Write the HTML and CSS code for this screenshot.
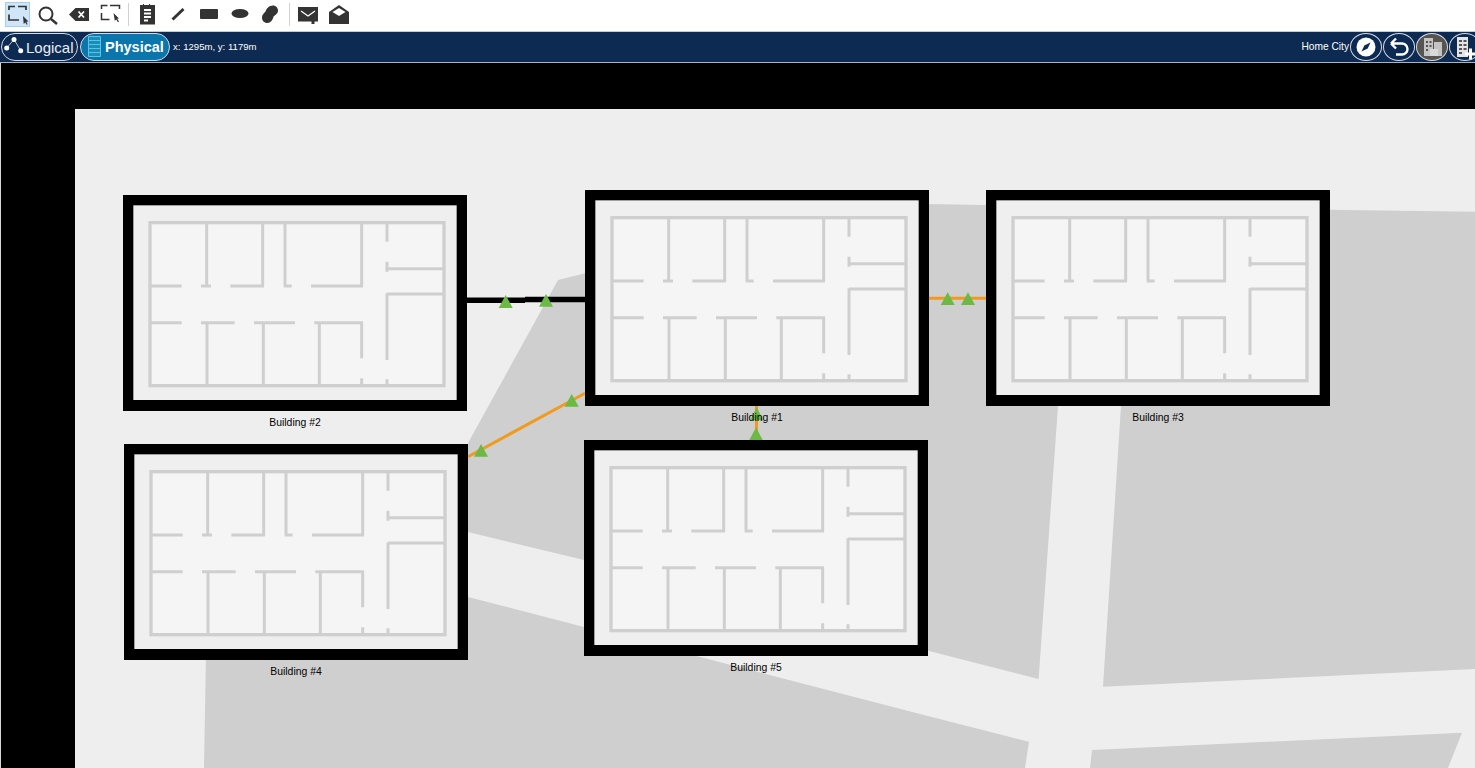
FILE: index.html
```html
<!DOCTYPE html>
<html lang="en">
<head>
<meta charset="utf-8">
<title>Physical view</title>
<link rel="stylesheet" href="styles.css">
</head>
<body>
<div class="app">
  <div class="toolbar">
    <div class="tool"><svg class="ico" viewBox="2 0 31 31"><rect class="hl" x="5.500" y="2.500" width="24" height="24"/><path class="dash" d="M9 10V6.500h6M18 6.500h8V10M9 14.500V20h10"/><path class="solid" d="M23 16l5.500 5.500-2.200.3 1.400 2.400-1 .6-1.400-2.400-1.600 1.600z"/></svg></div>
    <div class="tool"><svg class="ico" viewBox="33 0 31 31"><circle class="ring" cx="46" cy="14" r="6.500"/><path class="handle" d="M51 19l6 5"/></svg></div>
    <div class="tool"><svg class="ico" viewBox="64 0 31 31"><path class="solid" d="M69 14.500l6.500-6.500H89v13H75.500z"/><path class="cut" d="M78.500 11.500l5.500 6M84 11.500l-5.500 6"/></svg></div>
    <div class="tool"><svg class="ico" viewBox="95 0 31 31"><path class="dash thin" d="M101.500 9V5.500h6M110 5.500h9.500V9M101.500 13v6.500h8"/><path class="solid" d="M113.500 13l5.500 5.500-1.800.2 1.800 2.800-1 .7-1.800-2.800-1.400 1.400z"/></svg></div>
    <div class="sep"></div>
    <div class="tool"><svg class="ico" viewBox="131 0 31 31"><path class="solid" d="M140 5h3v-1h1v1h5v-1h1v1h5v19.500h-15z"/><path class="cut" d="M144 10h7M144 13.500h7M144 17h7M144 20.500h4"/></svg></div>
    <div class="tool"><svg class="ico" viewBox="162 0 31 31"><path class="handle wide" d="M172.500 19.500l11-10.500"/></svg></div>
    <div class="tool"><svg class="ico" viewBox="193 0 31 31"><rect class="solid" x="200" y="9" width="18" height="10" rx="1"/></svg></div>
    <div class="tool"><svg class="ico" viewBox="224 0 31 31"><ellipse class="solid" cx="240" cy="13.500" rx="8.500" ry="4.500"/></svg></div>
    <div class="tool"><svg class="ico" viewBox="255 0 31 31"><path class="solid" d="M262 17.500c0-3 2-4 3.500-6 1-3 3.500-6 7.500-6 3 0 5 2.500 5 5 0 3-2.500 4.500-4.500 6-.5 3-3 6.500-6 6.500-3.500 0-5.500-2.500-5.500-5.500z"/></svg></div>
    <div class="sep sep-wide"></div>
    <div class="tool"><svg class="ico" viewBox="292 0 31 31"><path class="solid" d="M298 7h20v14.500h-3.500V24h-3v-2.500H298z"/><path class="cut slim" d="M301 11l7 5 7-5"/></svg></div>
    <div class="tool"><svg class="ico" viewBox="323 0 31 31"><path class="solid" d="M329 12l10-7 10 7v12h-20z"/><path class="flap" d="M332.500 12l6.500-4 6.500 4-6.500 4z"/></svg></div>
  </div>

  <div class="navbar">
    <div class="pill pill-logical">
      <svg class="pill-ico" viewBox="0 0 23 26"><path class="net" d="M11 5.500L3.700 14M11 5.500l6.700 11"/><circle class="dot" cx="11" cy="5.500" r="2.500"/><circle class="dot" cx="3.700" cy="14" r="2.500"/><circle class="dot" cx="17.700" cy="16.700" r="2.500"/></svg>
      <span>Logical</span>
    </div>
    <div class="pill pill-physical">
      <svg class="pill-ico" viewBox="0 0 23 26"><path class="floors" d="M6.500 2.500h12v20h-12zM6.500 6.500h12M6.500 10.500h12M6.500 14.500h12M6.500 18.500h12"/></svg>
      <span>Physical</span>
    </div>
    <span class="coords">x: 1295m, y: 1179m</span>
    <div class="nav-right">
      <span class="city">Home City</span>
      <div class="round"><svg class="round-ico" viewBox="0 0 30 26"><circle class="white" cx="15" cy="13" r="9.500"/><path class="needle" d="M19.500 8.500l-2.800 6-6.200 3 2.800-6z"/></svg></div>
      <div class="round"><svg class="round-ico" viewBox="0 0 30 26"><path class="arrow" d="M7 9.500l5-5M7 9.500l5 5M7 9.500h11a5.500 5.500 0 0 1 0 11h-6"/></svg></div>
      <div class="round round-on"><svg class="round-ico" viewBox="0 0 30 26"><path class="pale" d="M7 4h9v18H7zM17 8h8v14h-8z"/><path class="win" d="M9 7h2v2H9zM12.500 7h2v2h-2zM9 11h2v2H9zM12.500 11h2v2h-2zM9 15h2v2H9z"/><path class="pale2" d="M13 15h8v7h-8z"/></svg></div>
      <div class="round"><svg class="round-ico" viewBox="0 0 30 26"><path class="pale3" d="M7 3h11v20H7z"/><path class="win" d="M9 6h3v2H9zM13.500 6h3v2h-3zM9 10h3v2H9zM13.500 10h3v2h-3zM9 14h3v2H9zM13.500 14h3v2h-3zM9 18h3v2H9z"/><path class="plus" d="M15 20h11M20.500 14.500v11"/></svg></div>
    </div>
  </div>

  <div class="stage">
    <svg class="map" viewBox="1 63 1474 705">
      <defs>
        <g id="bld" transform="scale(.33333) translate(-9 -15)">
          <rect class="b-outer" x="9" y="15" width="1032" height="648"/>
          <rect class="b-inner" x="40" y="46" width="970" height="584"/>
          <rect class="b-plan" x="90" y="98" width="882" height="489"/>
          <path class="b-wall" d="M260 98V288M428 98V288M495 98V288M725 98V288M90 288H185M243 288H273M331 288H432M491 288H515M573 288H729M90 398H185M243 398H344M402 398H525M583 398H729M261 398V587M430 398V587M598 398V587M725 398V505M725 565V587M801 310V510M801 568V587M801 98V155M801 215V245M801 236H972M801 312H972"/>
        </g>
      </defs>

      <rect class="land" x="75" y="109" width="1400" height="659"/>
      <path class="block" d="M468 443L558 280 590 272 925 204 1060 206 1058 406 1038.600 679 928 650.700 584 560 468 532Z"/>
      <path class="block" d="M1060 206L1475 211.700V669L1103 686.700 1121 406Z"/>
      <path class="block" d="M208 540L468 597 584 627 920 714 1029 741.700 1025 768H204Z"/>
      <path class="block" d="M1092 750L1462 732.700 1448 768H1090Z"/>

      <path class="link-black" d="M467 300.300H525"/>
      <path class="link-black" d="M525 299.500H585"/>
      <path class="link-orange" d="M468 456.700L585 393.300"/>
      <path class="link-orange" d="M929 298.300H986"/>
      <path class="link-orange" d="M756.500 406V440"/>
      <path class="tri" d="M505.700 295l7 13h-14z"/>
      <path class="tri" d="M546 294l7 12.700h-14z"/>
      <path class="tri" d="M571.700 394l7 12.700h-14z"/>
      <path class="tri" d="M481 444l7 12.700h-14z"/>
      <path class="tri" d="M947.700 292.300l7 12.700h-14z"/>
      <path class="tri" d="M968 292.300l7 12.700h-14z"/>
      <path class="tri" d="M756.700 407.300l6.500 13h-13z"/>
      <path class="tri" d="M756 427.500l6.700 12.500h-13.400z"/>

      <use href="#bld" x="123" y="195"/>
      <use href="#bld" x="585" y="190"/>
      <use href="#bld" x="986" y="190"/>
      <use href="#bld" x="124" y="444"/>
      <use href="#bld" x="584" y="440"/>

      <text class="label" x="295" y="426">Building #2</text>
      <text class="label" x="757" y="421">Building #1</text>
      <text class="label" x="1158" y="421">Building #3</text>
      <text class="label" x="296" y="675">Building #4</text>
      <text class="label" x="756" y="671">Building #5</text>
    </svg>
  </div>
</div>
</body>
</html>
```
FILE: styles.css
```css
* { box-sizing: border-box; }
html, body { margin: 0; height: 100%; overflow: hidden; background: #fff; }
body { font-family: "Liberation Sans", Arial, sans-serif; }
.app { display: flex; flex-direction: column; height: 768px; width: 1475px; overflow: hidden; }

.toolbar { display: flex; height: 32px; flex: none; padding-left: 2px; background: #fff; border-bottom: 1px solid #c6cad2; }
.tool { width: 31px; height: 31px; flex: none; }
.ico { display: block; width: 31px; height: 31px; }
.sep { width: 1px; height: 23px; margin: 3px 2px 0; background: #d2d2d2; flex: none; }
.sep-wide { margin-left: 3px; }
.hl { fill: #cfe5f8; stroke: #a6cfee; stroke-width: 1; }
.dash { fill: none; stroke: #333; stroke-width: 1.700; }
.dash.thin { stroke-width: 1.500; }
.solid { fill: #333; }
.ring { fill: none; stroke: #333; stroke-width: 2; }
.handle { fill: none; stroke: #333; stroke-width: 2.400; }
.handle.wide { stroke-width: 3; }
.cut { fill: none; stroke: #fff; stroke-width: 1.800; }
.cut.slim { stroke-width: 1.300; }
.flap { fill: #fff; }

.navbar { display: flex; align-items: flex-start; height: 31px; flex: none; padding: 1px 0 0 1px; gap: 2px; background: #0d2a52; border-bottom: 1px solid #aab3c0; color: #fff; overflow: hidden; }
.pill { display: flex; align-items: center; height: 28px; border: 1px solid #d3dae4; border-radius: 14px; flex: none; }
.pill-logical { width: 77px; background: #0d2a52; color: #e9eef5; padding-left: 1px; font-size: 15px; }
.pill-physical { width: 90px; background: #0a76ab; font-weight: bold; padding-left: 1px; font-size: 14.500px; }
.pill-ico { width: 23px; height: 26px; flex: none; }
.net { fill: none; stroke: #fff; stroke-width: .7; }
.dot { fill: #fff; }
.floors { fill: #1a8dbd; stroke: #5cc3de; stroke-width: 1; }
.coords { font-size: 9.600px; line-height: 28px; margin-left: 1px; white-space: nowrap; }
.nav-right { display: flex; align-items: center; gap: 1px; margin-left: auto; margin-right: -6px; flex: none; }
.city { font-size: 10.200px; line-height: 28px; white-space: nowrap; }
.round { width: 32px; height: 28px; border: 1px solid #d3dae4; border-radius: 50%; flex: none; background: #0d2a52; }
.round-on { background: #58544f; }
.round-ico { display: block; width: 30px; height: 26px; }
.white { fill: #fff; }
.needle { fill: #0d2a52; }
.arrow { fill: none; stroke: #fff; stroke-width: 2.400; }
.pale { fill: #c4c4c4; }
.pale2 { fill: #d8d8d8; }
.pale3 { fill: #e4e4e4; }
.win { fill: #555; }
.plus { fill: none; stroke: #fff; stroke-width: 3; }

.stage { flex: 1; min-height: 0; background: #000; border-left: 1px solid #d8d8d8; }
.map { display: block; width: 1474px; height: 705px; }
.land { fill: #eeeeee; }
.block { fill: #cfcfcf; }
.link-black { fill: none; stroke: #000; stroke-width: 5.500; }
.link-orange { fill: none; stroke: #f09a1e; stroke-width: 3; }
.tri { fill: #6cb944; }
.b-outer { fill: #000; }
.b-inner { fill: #efefef; }
.b-plan { fill: #f5f5f5; stroke: #cfcfcf; stroke-width: 10; }
.b-wall { fill: none; stroke: #cfcfcf; stroke-width: 9; }
.label { font-family: "Liberation Sans", Arial, sans-serif; font-size: 10.400px; fill: #000; text-anchor: middle; }
```
